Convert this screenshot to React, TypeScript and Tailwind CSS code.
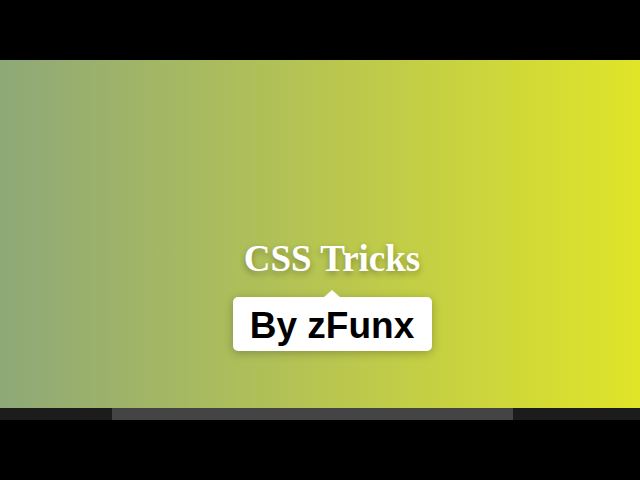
export default function App() {
  return (
    <div className="flex h-[480px] w-[640px] flex-col bg-black">
      <div className="h-[60px] shrink-0 bg-black" />
      <div className="flex flex-1 flex-col items-center bg-[linear-gradient(to_right,#8ea878,#b7c551_50%,#e0e528)] pl-[24px] pt-[179px]">
        <div
          className="text-[37px] font-bold leading-[40px] text-white [text-shadow:0_3px_6px_rgba(0,0,0,0.3)]"
          style={{ fontFamily: '"Liberation Serif", "Times New Roman", serif' }}
        >
          CSS Tricks
        </div>
        <div className="relative mt-[18px] flex h-[54px] w-[199px] items-center justify-center rounded-[5px] bg-white shadow-[0_2px_10px_rgba(0,0,0,0.25)]">
          <div className="absolute left-1/2 top-[-7px] h-0 w-0 -translate-x-1/2 border-x-[8px] border-b-[7px] border-x-transparent border-b-white" />
          <span
            className="pt-[3px] text-[37px] font-bold leading-none text-black"
            style={{ fontFamily: '"Liberation Sans", Arial, sans-serif' }}
          >
            By zFunx
          </span>
        </div>
      </div>
      <div className="flex h-[12px] shrink-0 bg-[#1c1c1c]">
        <div className="ml-[112px] w-[401px] bg-[#444444]" />
      </div>
      <div className="h-[60px] shrink-0 bg-black" />
    </div>
  )
}
